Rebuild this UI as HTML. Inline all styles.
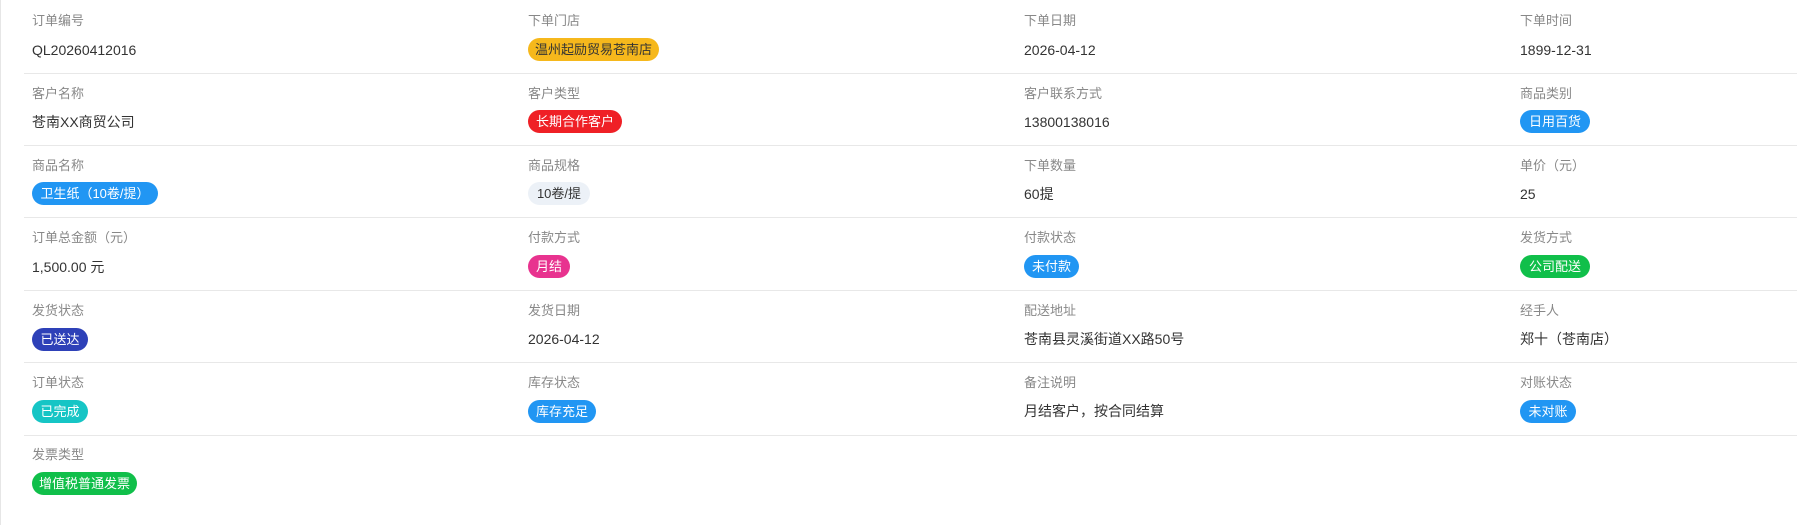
<!DOCTYPE html>
<html><head><meta charset="utf-8"><style>
html,body{margin:0;padding:0;background:#fff;}
body{width:1797px;height:525px;position:relative;overflow:hidden;font-family:"Liberation Sans","Noto Sans CJK SC",sans-serif;}
.lb{position:absolute;left:0;width:1px;top:0;height:525px;background:#e6e6e6;}
.hr{position:absolute;left:24px;right:0;height:1px;background:#e8e8e8;}
.l{position:absolute;font-size:13px;color:#888;line-height:16px;white-space:nowrap;}
.v{position:absolute;font-size:14px;color:#333;line-height:18px;white-space:nowrap;}
.t{position:absolute;height:23px;line-height:23px;border-radius:12px;font-size:13px;color:#fff;text-align:center;white-space:nowrap;}
</style></head><body>
<div class="lb"></div>
<div class="hr" style="top:73px"></div>
<div class="hr" style="top:145px"></div>
<div class="hr" style="top:217px"></div>
<div class="hr" style="top:290px"></div>
<div class="hr" style="top:362px"></div>
<div class="hr" style="top:435px"></div>

<!-- row 1 -->
<div class="l" style="left:32px;top:13px">订单编号</div>
<div class="v" style="left:32px;top:41px">QL20260412016</div>
<div class="l" style="left:528px;top:13px">下单门店</div>
<div class="t" style="left:528px;top:38px;width:131px;background:#f6b81c;color:#333">温州起励贸易苍南店</div>
<div class="l" style="left:1024px;top:13px">下单日期</div>
<div class="v" style="left:1024px;top:41px">2026-04-12</div>
<div class="l" style="left:1520px;top:13px">下单时间</div>
<div class="v" style="left:1520px;top:41px">1899-12-31</div>

<!-- row 2 -->
<div class="l" style="left:32px;top:86px">客户名称</div>
<div class="v" style="left:32px;top:113px">苍南XX商贸公司</div>
<div class="l" style="left:528px;top:86px">客户类型</div>
<div class="t" style="left:528px;top:110px;width:94px;background:#ef2026">长期合作客户</div>
<div class="l" style="left:1024px;top:86px">客户联系方式</div>
<div class="v" style="left:1024px;top:113px">13800138016</div>
<div class="l" style="left:1520px;top:86px">商品类别</div>
<div class="t" style="left:1520px;top:110px;width:70px;background:#2196f3">日用百货</div>

<!-- row 3 -->
<div class="l" style="left:32px;top:158px">商品名称</div>
<div class="t" style="left:32px;top:182px;width:126px;background:#2196f3">卫生纸（10卷/提）</div>
<div class="l" style="left:528px;top:158px">商品规格</div>
<div class="t" style="left:528px;top:182px;width:62px;background:#ecf1f7;color:#333">10卷/提</div>
<div class="l" style="left:1024px;top:158px">下单数量</div>
<div class="v" style="left:1024px;top:185px">60提</div>
<div class="l" style="left:1520px;top:158px">单价（元）</div>
<div class="v" style="left:1520px;top:185px">25</div>

<!-- row 4 -->
<div class="l" style="left:32px;top:230px">订单总金额（元）</div>
<div class="v" style="left:32px;top:258px">1,500.00 元</div>
<div class="l" style="left:528px;top:230px">付款方式</div>
<div class="t" style="left:528px;top:255px;width:42px;background:#e8338f">月结</div>
<div class="l" style="left:1024px;top:230px">付款状态</div>
<div class="t" style="left:1024px;top:255px;width:55px;background:#2196f3">未付款</div>
<div class="l" style="left:1520px;top:230px">发货方式</div>
<div class="t" style="left:1520px;top:255px;width:70px;background:#10bf4a">公司配送</div>

<!-- row 5 -->
<div class="l" style="left:32px;top:303px">发货状态</div>
<div class="t" style="left:32px;top:328px;width:56px;background:#2e41b8">已送达</div>
<div class="l" style="left:528px;top:303px">发货日期</div>
<div class="v" style="left:528px;top:330px">2026-04-12</div>
<div class="l" style="left:1024px;top:303px">配送地址</div>
<div class="v" style="left:1024px;top:330px">苍南县灵溪街道XX路50号</div>
<div class="l" style="left:1520px;top:303px">经手人</div>
<div class="v" style="left:1520px;top:330px">郑十（苍南店）</div>

<!-- row 6 -->
<div class="l" style="left:32px;top:375px">订单状态</div>
<div class="t" style="left:32px;top:400px;width:56px;background:#16c5c5">已完成</div>
<div class="l" style="left:528px;top:375px">库存状态</div>
<div class="t" style="left:528px;top:400px;width:68px;background:#2196f3">库存充足</div>
<div class="l" style="left:1024px;top:375px">备注说明</div>
<div class="v" style="left:1024px;top:402px">月结客户，按合同结算</div>
<div class="l" style="left:1520px;top:375px">对账状态</div>
<div class="t" style="left:1520px;top:400px;width:56px;background:#2196f3">未对账</div>

<!-- row 7 -->
<div class="l" style="left:32px;top:447px">发票类型</div>
<div class="t" style="left:32px;top:472px;width:105px;background:#10bf4a">增值税普通发票</div>
</body></html>
